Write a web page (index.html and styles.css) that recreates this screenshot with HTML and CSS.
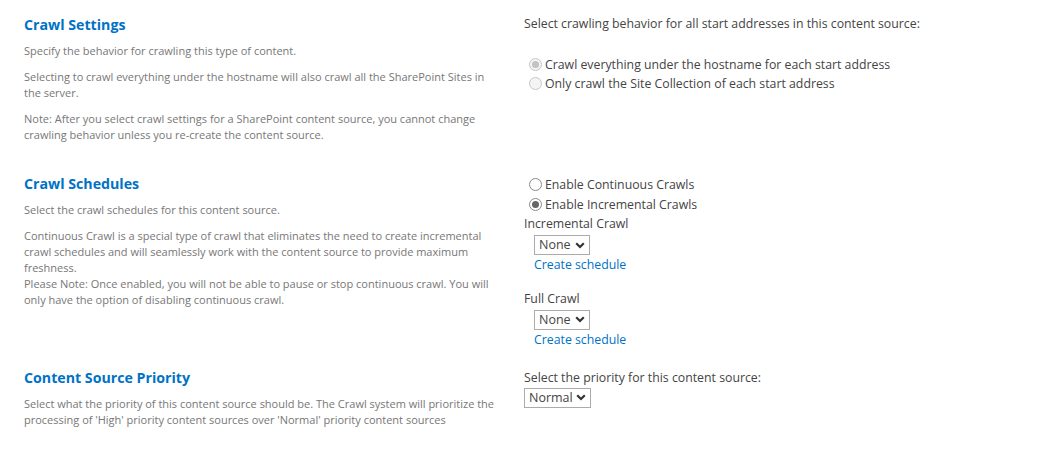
FILE: index.html
```html
<!DOCTYPE html>
<html>
<head>
<meta charset="utf-8">
<link rel="stylesheet" href="styles.css">
</head>
<body>
<div class="page">
  <section class="row">
    <div class="left">
      <h3 class="head">Crawl Settings</h3>
      <p class="desc">Specify the behavior for crawling this type of content.</p>
      <p class="desc">Selecting to crawl everything under the hostname will also crawl all the SharePoint Sites in the server.</p>
      <p class="desc">Note: After you select crawl settings for a SharePoint content source, you cannot change crawling behavior unless you re-create the content source.</p>
    </div>
    <div class="right">
      <div class="label first">Select crawling behavior for all start addresses in this content source:</div>
      <div class="radios gap">
        <label class="opt"><span class="radio disabled checked"></span>Crawl everything under the hostname for each start address</label>
        <label class="opt"><span class="radio disabled"></span>Only crawl the Site Collection of each start address</label>
      </div>
    </div>
  </section>

  <section class="row sched-row">
    <div class="left">
      <h3 class="head">Crawl Schedules</h3>
      <p class="desc">Select the crawl schedules for this content source.</p>
      <p class="desc">Continuous Crawl is a special type of crawl that eliminates the need to create incremental crawl schedules and will seamlessly work with the content source to provide maximum freshness.<br>Please Note: Once enabled, you will not be able to pause or stop continuous crawl. You will only have the option of disabling continuous crawl.</p>
    </div>
    <div class="right sched">
      <div class="radios">
        <label class="opt"><span class="radio"></span>Enable Continuous Crawls</label>
        <label class="opt"><span class="radio checked"></span>Enable Incremental Crawls</label>
      </div>
      <div class="label">Incremental Crawl</div>
      <div class="indent">
        <span class="select">None<svg class="chev" width="10" height="7" viewBox="0 0 10 7"><path d="M1.2 1.3 L5 5 L8.8 1.3" fill="none" stroke="#333" stroke-width="2.2"/></svg></span>
        <a class="link">Create schedule</a>
      </div>
      <div class="label spaced">Full Crawl</div>
      <div class="indent">
        <span class="select">None<svg class="chev" width="10" height="7" viewBox="0 0 10 7"><path d="M1.2 1.3 L5 5 L8.8 1.3" fill="none" stroke="#333" stroke-width="2.2"/></svg></span>
        <a class="link">Create schedule</a>
      </div>
    </div>
  </section>

  <section class="row">
    <div class="left">
      <h3 class="head">Content Source Priority</h3>
      <p class="desc">Select what the priority of this content source should be. The Crawl system will prioritize the processing of 'High' priority content sources over 'Normal' priority content sources</p>
    </div>
    <div class="right prio">
      <div class="label">Select the priority for this content source:</div>
      <span class="select wide">Normal<svg class="chev" width="10" height="7" viewBox="0 0 10 7"><path d="M1.2 1.3 L5 5 L8.8 1.3" fill="none" stroke="#333" stroke-width="2.2"/></svg></span>
    </div>
  </section>
</div>
</body>
</html>
```
FILE: styles.css
```css
html, body {
  margin: 0;
  padding: 0;
  background: #fff;
}
body {
  font-family: "Open Sans", "Noto Sans", sans-serif;
  color: #444;
}
.page {
  padding: 12px 0 0 24px;
}
.row {
  display: grid;
  grid-template-columns: 476px 1fr;
  column-gap: 24px;
  padding-bottom: 18px;
}
.row.sched-row {
  padding-bottom: 16px;
}
.head {
  margin: 3px 0 8px;
  font-size: 14.2px;
  line-height: 20px;
  font-weight: 700;
  color: #0072c6;
}
.desc {
  margin: 0 0 10px;
  font-size: 11px;
  line-height: 16px;
  color: #777;
}
.right {
  font-size: 12.3px;
  line-height: 19.5px;
  color: #444;
  padding-top: 2px;
}
.right.sched {
  padding-top: 4px;
}
.right.prio {
  padding-top: 3px;
}
.radios {
  display: flex;
  flex-direction: column;
  padding-left: 5px;
}
.radios.gap {
  margin-top: 21px;
}
.opt {
  display: flex;
  align-items: center;
  gap: 3px;
  height: 19.5px;
}
.radio {
  width: 11px;
  height: 11px;
  border: 1px solid #8a8a8a;
  border-radius: 50%;
  background: #fff;
  box-sizing: content-box;
  display: inline-flex;
  align-items: center;
  justify-content: center;
}
.radio.checked::after {
  content: "";
  width: 7px;
  height: 7px;
  border-radius: 50%;
  background: #666;
}
.radio.disabled {
  border-color: #c6c6c6;
  background: #f4f4f4;
}
.radio.disabled.checked::after {
  background: #c2c2c2;
}
.indent {
  padding-left: 10px;
  display: flex;
  flex-direction: column;
  align-items: flex-start;
}
.select {
  display: inline-flex;
  align-items: center;
  justify-content: space-between;
  box-sizing: border-box;
  width: 56px;
  height: 20px;
  padding: 0 4px 0 4px;
  border: 1px solid #ababab;
  color: #444;
  margin-top: 1.5px;
  font-size: 12.5px;
}
.select.wide {
  width: 67px;
  margin-top: 0;
}
.link {
  color: #0072c6;
  text-decoration: none;
}
.label.spaced {
  margin-top: 14px;
}
```
